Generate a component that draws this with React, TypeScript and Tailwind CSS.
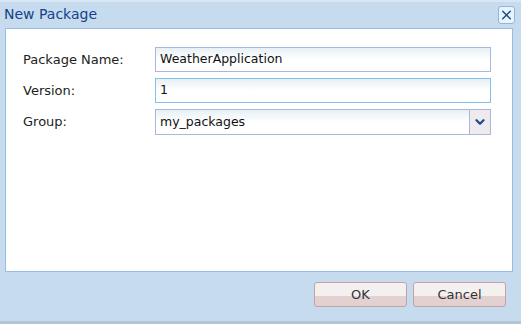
import { ChevronDown, X } from 'lucide-react';

const font = { fontFamily: '"DejaVu Sans", Verdana, sans-serif' };

function Field({ label, value, focused }: { label: string; value: string; focused?: boolean }) {
  return (
    <div className="flex items-center h-[25px]">
      <div className="w-[132px] text-[13px] text-[#222]">{label}</div>
      <div
        className={`w-[336px] h-[25px] border flex items-center px-[4px] text-[12.5px] text-[#111] bg-gradient-to-b from-[#e7f0f4] via-white to-white ${
          focused ? 'border-[#7fc3ec]' : 'border-[#a9b7dc]'
        }`}
      >
        {value}
      </div>
    </div>
  );
}

export default function App() {
  return (
    <div className="w-[521px] h-[324px] bg-[#c6dcee] flex flex-col border-t-2 border-[#d9e7f4] border-b-[3px] border-b-[#b4c6d6]" style={font}>
      {/* Title */}
      <div className="h-[26px] flex items-center justify-between pl-[4px] pr-[6px]">
        <span className="text-[14px] text-[#15428b] -mt-[2px]">New Package</span>
        <button className="w-[17px] h-[18px] rounded-[3px] border border-[#8fb6dd] bg-[#eaf3fb] flex items-center justify-center">
          <X className="w-[16px] h-[16px] text-[#1d4f8f]" strokeWidth={2.5} />
        </button>
      </div>

      {/* Body */}
      <div className="mx-[5px] mr-[8px] h-[244px] bg-white border border-[#99bbe8] pt-[18px] pl-[17px] flex flex-col gap-[6px]">
        <Field label="Package Name:" value="WeatherApplication" />
        <Field label="Version:" value="1" focused />
        <div className="flex items-center h-[26px]">
          <div className="w-[132px] text-[13px] text-[#222]">Group:</div>
          <div className="w-[336px] h-[26px] border border-[#a9b7dc] flex">
            <div className="flex-1 flex items-center px-[4px] text-[12.5px] text-[#111] bg-gradient-to-b from-[#e7f0f4] via-white to-white">
              my_packages
            </div>
            <div className="w-[21px] border-l border-[#a9b7dc] bg-[#eeeaee] flex items-center justify-center">
              <ChevronDown className="w-[14px] h-[14px] text-[#1d4f8f]" strokeWidth={4} />
            </div>
          </div>
        </div>
      </div>

      {/* Buttons */}
      <div className="flex justify-end gap-[6px] pt-[10px] pr-[15px]">
        {['OK', 'Cancel'].map((t) => (
          <button
            key={t}
            className="w-[93px] h-[25px] rounded-[3px] border border-[#c4a2a2] flex items-center justify-center text-[13px] font-normal text-[#333] bg-[linear-gradient(to_bottom,#f4f0f0_0,#f4f0f0_13px,#e3d1d1_13px,#e3d1d1_100%)]"
          >
            {t}
          </button>
        ))}
      </div>
    </div>
  );
}
